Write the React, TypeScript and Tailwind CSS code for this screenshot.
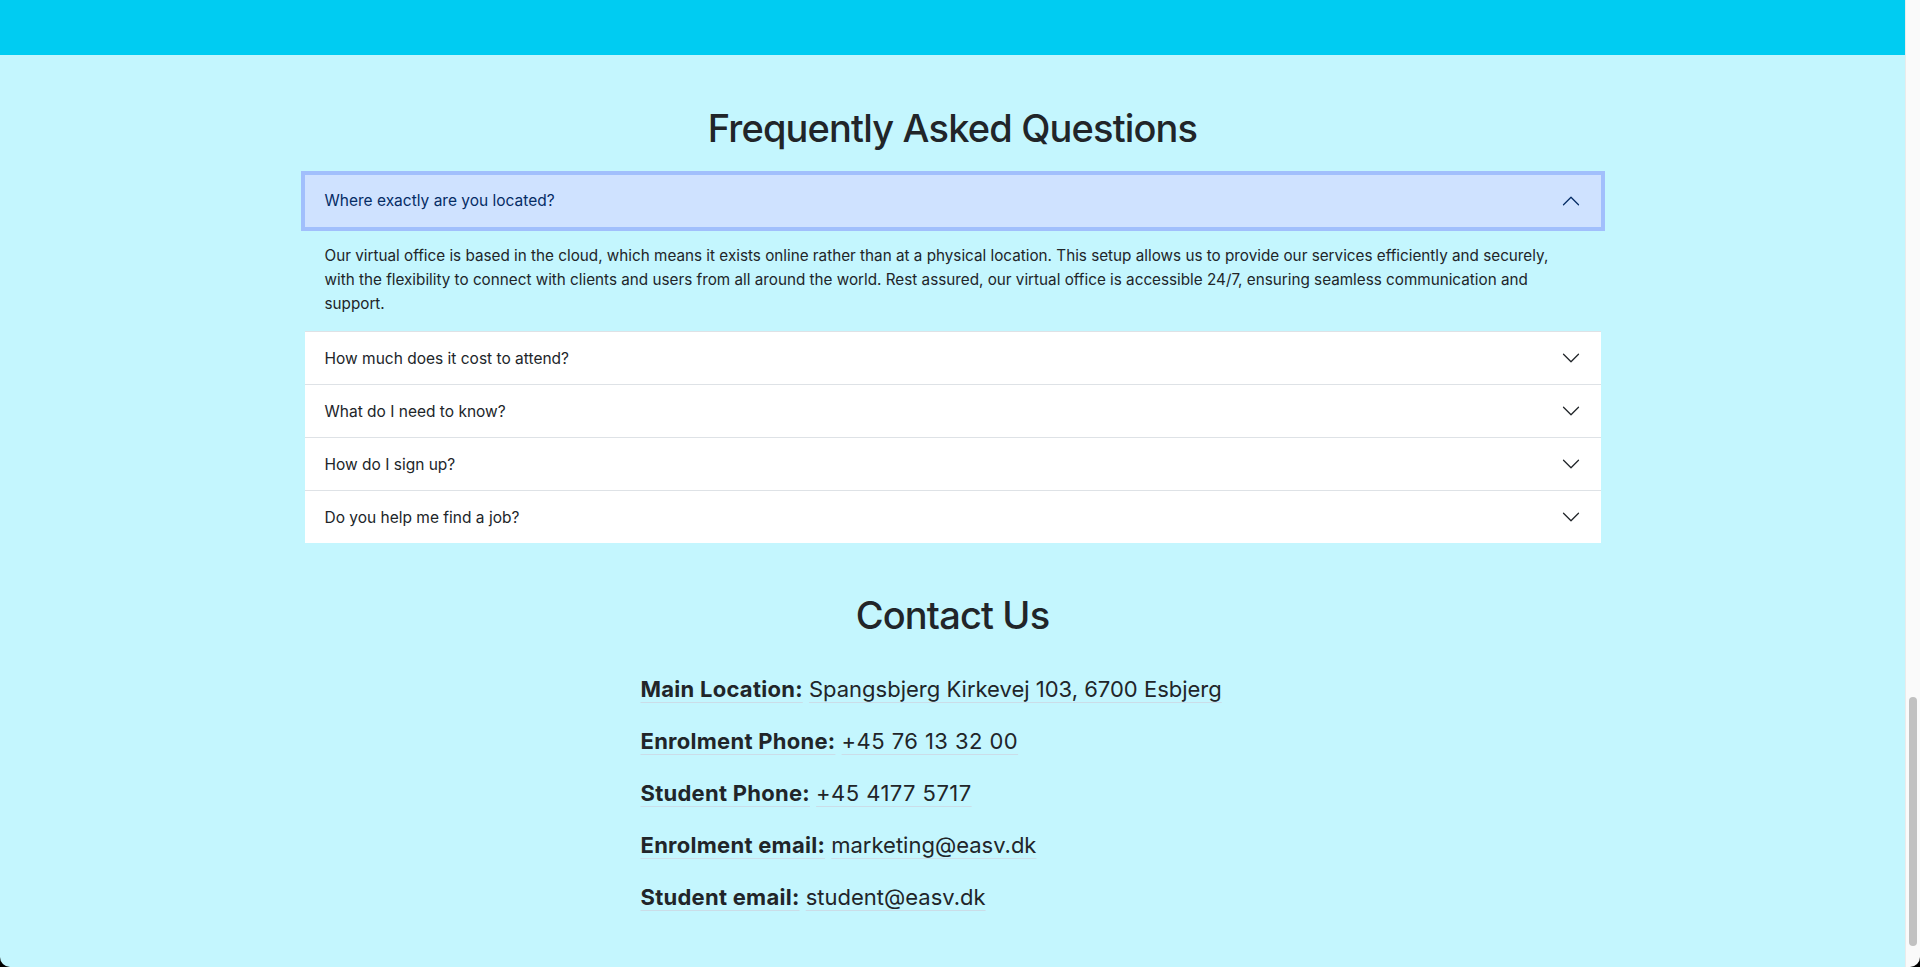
import React from "react";

function Chevron({ up = false }: { up?: boolean }) {
  return (
    <svg
      viewBox="0 0 16 16"
      className={`w-5 h-5 shrink-0 ${up ? "rotate-180" : ""}`}
      fill="none"
      stroke={up ? "#052c65" : "#212529"}
      strokeLinecap="round"
      strokeLinejoin="round"
    >
      <path d="M2 5L8 11L14 5" />
    </svg>
  );
}

export default function App() {
  const items = [
    "How much does it cost to attend?",
    "What do I need to know?",
    "How do I sign up?",
    "Do you help me find a job?",
  ];
  const contacts: [string, string, string][] = [
    ["Main Location:", "Spangsbjerg Kirkevej 103, 6700 Esbjerg", "tracking-normal"],
    ["Enrolment Phone:", "+45 76 13 32 00", "tracking-[0.02em]"],
    ["Student Phone:", "+45 4177 5717", "tracking-[0.02em]"],
    ["Enrolment email:", "marketing@easv.dk", "tracking-normal"],
    ["Student email:", "student@easv.dk", "tracking-normal"],
  ];
  return (
    <div className="w-[1920px] h-[967px] bg-black overflow-hidden font-['Inter',sans-serif] text-[#212529]">
      <div className="flex h-full rounded-b-[10px] overflow-hidden">
        <main className="w-[1905px] h-full bg-[#c4f6fe] flex flex-col">
          <div className="h-[55px] bg-[#00ccf2] shrink-0" />
          <section className="w-[1296px] mx-auto pt-[51px]">
            <h2 className="text-center text-[38px] leading-[45.6px] font-medium tracking-[-0.022em]">
              Frequently Asked Questions
            </h2>
            <div className="mt-[23px]">
              <div>
                <button className="relative z-10 w-full flex items-center justify-between px-5 py-4 bg-[#cfe2ff] text-[#052c65] text-[15.5px] leading-[20px] text-left shadow-[0_0_0_4px_#a1bffc]">
                  <span>Where exactly are you located?</span>
                  <Chevron up />
                </button>
                <div className="px-5 pt-[17px] pb-[15px] text-[15.25px] leading-[24.3px]">
                  Our virtual office is based in the cloud, which means it exists online rather than at a physical
                  location. This setup allows us to provide our services efficiently and securely, with the
                  flexibility to connect with clients and users from all around the world. Rest assured, our virtual
                  office is accessible 24/7, ensuring seamless communication and support.
                </div>
              </div>
              {items.map((q) => (
                <div key={q} className="border-t border-[#dee2e6] bg-white">
                  <button className="w-full flex items-center justify-between px-5 py-4 text-[15.5px] leading-[19.7px] text-left text-[#212529]">
                    <span>{q}</span>
                    <Chevron />
                  </button>
                </div>
              ))}
            </div>
          </section>
          <section className="w-[1296px] mx-auto pt-[50px]">
            <h2 className="text-center text-[38px] leading-[45.6px] font-medium tracking-[-0.022em]">Contact Us</h2>
            <div className="w-[624px] mx-auto mt-[34px] flex flex-col gap-[19px] text-[22px] leading-[33px]">
              {contacts.map(([label, value, track]) => (
                <p key={label}>
                  <strong className="font-bold tracking-[0.012em] underline decoration-[#cbdde8] decoration-1 underline-offset-[5px]">
                    {label}
                  </strong>{" "}
                  <span className={`${track} underline decoration-[#cbdde8] decoration-1 underline-offset-[5px]`}>
                    {value}
                  </span>
                </p>
              ))}
            </div>
          </section>
        </main>
        <div className="w-[15px] h-full bg-[#fafafa] border-l border-[#ebebeb] pt-[697px] pl-[3px]">
          <div className="w-[8px] h-[249px] rounded-full bg-[#c1c1c1]" />
        </div>
      </div>
    </div>
  );
}
